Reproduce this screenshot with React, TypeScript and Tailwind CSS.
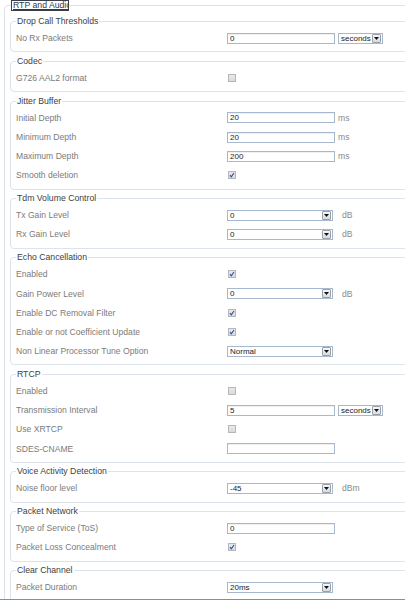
import React from "react";

type Control =
  | { kind: "text"; value: string; unit?: string; seconds?: boolean }
  | { kind: "select"; value: string; unit?: string }
  | { kind: "check"; checked: boolean };

type Row = { label: string; control: Control };
type Section = { title: string; rows: Row[]; open?: boolean };

const sections: Section[] = [
  {
    title: "Drop Call Thresholds",
    rows: [{ label: "No Rx Packets", control: { kind: "text", value: "0", seconds: true } }],
  },
  {
    title: "Codec",
    rows: [{ label: "G726 AAL2 format", control: { kind: "check", checked: false } }],
  },
  {
    title: "Jitter Buffer",
    rows: [
      { label: "Initial Depth", control: { kind: "text", value: "20", unit: "ms" } },
      { label: "Minimum Depth", control: { kind: "text", value: "20", unit: "ms" } },
      { label: "Maximum Depth", control: { kind: "text", value: "200", unit: "ms" } },
      { label: "Smooth deletion", control: { kind: "check", checked: true } },
    ],
  },
  {
    title: "Tdm Volume Control",
    rows: [
      { label: "Tx Gain Level", control: { kind: "select", value: "0", unit: "dB" } },
      { label: "Rx Gain Level", control: { kind: "select", value: "0", unit: "dB" } },
    ],
  },
  {
    title: "Echo Cancellation",
    rows: [
      { label: "Enabled", control: { kind: "check", checked: true } },
      { label: "Gain Power Level", control: { kind: "select", value: "0", unit: "dB" } },
      { label: "Enable DC Removal Filter", control: { kind: "check", checked: true } },
      { label: "Enable or not Coefficient Update", control: { kind: "check", checked: true } },
      { label: "Non Linear Processor Tune Option", control: { kind: "select", value: "Normal" } },
    ],
  },
  {
    title: "RTCP",
    rows: [
      { label: "Enabled", control: { kind: "check", checked: false } },
      { label: "Transmission Interval", control: { kind: "text", value: "5", seconds: true } },
      { label: "Use XRTCP", control: { kind: "check", checked: false } },
      { label: "SDES-CNAME", control: { kind: "text", value: "" } },
    ],
  },
  {
    title: "Voice Activity Detection",
    rows: [{ label: "Noise floor level", control: { kind: "select", value: "-45", unit: "dBm" } }],
  },
  {
    title: "Packet Network",
    rows: [
      { label: "Type of Service (ToS)", control: { kind: "text", value: "0" } },
      { label: "Packet Loss Concealment", control: { kind: "check", checked: true } },
    ],
  },
  {
    title: "Clear Channel",
    rows: [{ label: "Packet Duration", control: { kind: "select", value: "20ms" } }],
    open: true,
  },
];

// little grey dropdown button used by every select
const DropButton = () => (
  <span className="flex h-[9px] w-[9px] shrink-0 items-center justify-center rounded-[1px] border border-[#98a2ad] bg-gradient-to-b from-[#f7f7f7] to-[#dadada]">
    <svg width="5" height="3" viewBox="0 0 5 3">
      <path d="M0 0h5L2.5 3z" fill="#111" />
    </svg>
  </span>
);

const Select = ({ value, wide }: { value: string; wide?: boolean }) => (
  <div
    className={`${wide ? "w-[106px]" : "w-[45px]"} flex h-[11px] items-center justify-between border border-[#a6b8cc] bg-white pl-[2px] pr-[1px] text-[8px] leading-[9px] text-[#222]`}
  >
    <span>{value}</span>
    <DropButton />
  </div>
);

const Check = ({ checked }: { checked: boolean }) => (
  <span className="ml-[1px] flex h-[8px] w-[8px] items-center justify-center border border-[#b4b8bd] bg-gradient-to-b from-[#e9e9e9] to-[#d9dadc]">
    {checked && (
      <svg width="6" height="6" viewBox="0 0 6 6">
        <path d="M1 3.2l1.3 1.6L5 1" stroke="#2d4ea6" strokeWidth="1.1" fill="none" />
      </svg>
    )}
  </span>
);

const Unit = ({ text, gap }: { text: string; gap: string }) => (
  <span className={`${gap} text-[8.6px] leading-[10px] text-[#8a8a8a]`}>{text}</span>
);

const ControlCell = ({ c }: { c: Control }) => {
  if (c.kind === "check") return <Check checked={c.checked} />;
  if (c.kind === "select")
    return (
      <div className="flex items-center">
        <Select value={c.value} wide />
        {c.unit && <Unit text={c.unit} gap="ml-[9px]" />}
      </div>
    );
  return (
    <div className="flex items-center">
      <input
        readOnly
        value={c.value}
        className="h-[11px] w-[108px] border border-[#a6b8cc] bg-white pl-[2px] text-[8px] leading-[9px] text-[#222] shadow-[inset_0_1px_0_rgba(0,0,0,0.06)] outline-none"
      />
      {c.seconds && (
        <div className="ml-[3px]">
          <Select value="seconds" />
        </div>
      )}
      {c.unit && <Unit text={c.unit} gap="ml-[3px]" />}
    </div>
  );
};

const SectionBox = ({ s }: { s: Section }) => (
  <fieldset
    className={`${s.open ? "pb-[40px]" : "pb-[3.5px]"} rounded-[4px] border border-[#dde3ea] pl-[5px]`}
  >
    <legend className="px-[1px] text-[8.7px] leading-[11px] text-[#3e3e3e]">{s.title}</legend>
    <div className="pt-[1.5px]">
      {s.rows.map((r, i) => (
        <div key={i} className="flex h-[19.2px] items-center">
          <div className="w-[211px] shrink-0 text-[8.6px] leading-[10px] text-[#7b7b7b]">{r.label}</div>
          <ControlCell c={r.control} />
        </div>
      ))}
    </div>
  </fieldset>
);

export default function App() {
  return (
    <div className="h-[600px] w-[405px] overflow-hidden border-b border-[#8e8e8e] bg-white font-['Liberation_Sans',Arial,sans-serif]">
      <div className="w-[450px] pl-[4px]">
        <fieldset className="rounded-[4px] border border-[#dde2e8] pl-[5px]">
          <legend className="ml-[1px] w-[58px] overflow-hidden whitespace-nowrap border border-[#3b3f4a] pl-[1px] text-[8.7px] leading-[9px] text-[#2c3a56] underline">
            RTP and Audio
          </legend>
          <div className="flex flex-col gap-[3.7px] pt-[5px]">
            {sections.map((s) => (
              <SectionBox key={s.title} s={s} />
            ))}
          </div>
        </fieldset>
      </div>
    </div>
  );
}
